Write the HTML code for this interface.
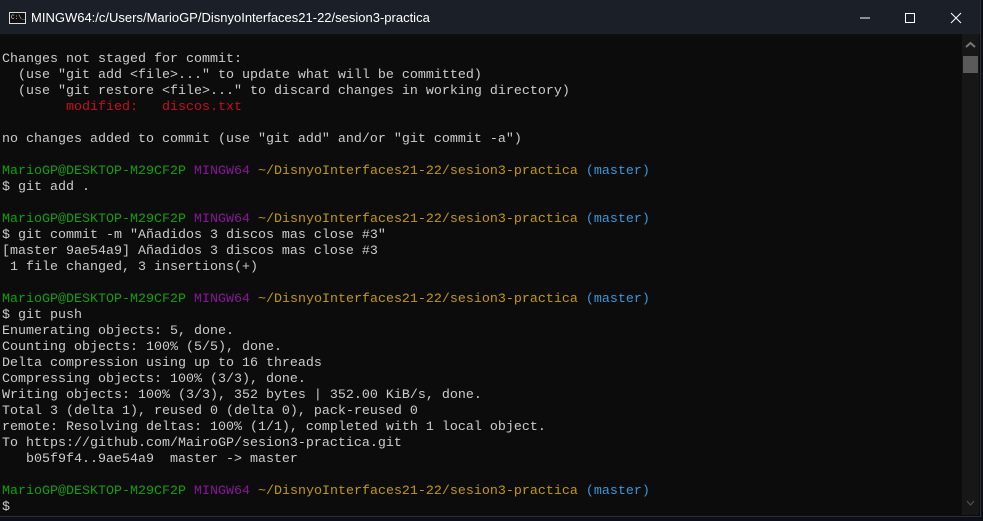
<!DOCTYPE html>
<html><head><meta charset="utf-8"><style>
html,body{margin:0;padding:0;background:#0c1016;width:983px;height:521px;overflow:hidden}
.win{position:absolute;left:0;top:0;width:980px;height:516px;background:#0c0c0c;border-right:1px solid #2b3038;border-bottom:1px solid #2b3038}
.title{position:absolute;left:0;top:0;width:980px;height:34px;background:#1a1f28;color:#fff;font:13px "Liberation Sans",sans-serif}
.title .t{position:absolute;left:31px;top:10px}
.ico{position:absolute;left:9px;top:12px;width:15px;height:10px;border:1px solid #ddd;background:#111}
.ico:after{content:"C:\\_";position:absolute;left:1px;top:1px;font:6px/7px "Liberation Mono",monospace;color:#ddd}
.term{position:absolute;left:2px;top:36px;font:13.33px/16px "Liberation Mono",monospace;color:#cccccc;white-space:pre}
.g{color:#13a10e}.m{color:#881798}.y{color:#c19c00}.b{color:#3a96dd}.r{color:#c50f1f}
.sb{position:absolute;left:962px;top:34px;width:17px;height:481px;background:#171717}
.thumb{position:absolute;left:1px;top:22px;width:15px;height:17px;background:#5a5a5a}
</style></head><body>
<div class="win">
<div class="title"><div class="ico"></div><span class="t">MINGW64:/c/Users/MarioGP/DisnyoInterfaces21-22/sesion3-practica</span>
<svg style="position:absolute;left:855px;top:10px" width="120" height="16">
<line x1="5" y1="8" x2="15" y2="8" stroke="#fff" stroke-width="1"/>
<rect x="50.5" y="3.5" width="9" height="9" fill="none" stroke="#fff"/>
<path d="M96 3L106 13M106 3L96 13" stroke="#fff" stroke-width="1"/>
</svg></div>
<div class="term">
Changes not staged for commit:
  (use "git add &lt;file&gt;..." to update what will be committed)
  (use "git restore &lt;file&gt;..." to discard changes in working directory)
<span class="r">        modified:   discos.txt</span>

no changes added to commit (use "git add" and/or "git commit -a")

<span class="g">MarioGP@DESKTOP-M29CF2P</span> <span class="m">MINGW64</span> <span class="y">~/DisnyoInterfaces21-22/sesion3-practica</span> <span class="b">(master)</span>
$ git add .

<span class="g">MarioGP@DESKTOP-M29CF2P</span> <span class="m">MINGW64</span> <span class="y">~/DisnyoInterfaces21-22/sesion3-practica</span> <span class="b">(master)</span>
$ git commit -m "Añadidos 3 discos mas close #3"
[master 9ae54a9] Añadidos 3 discos mas close #3
 1 file changed, 3 insertions(+)

<span class="g">MarioGP@DESKTOP-M29CF2P</span> <span class="m">MINGW64</span> <span class="y">~/DisnyoInterfaces21-22/sesion3-practica</span> <span class="b">(master)</span>
$ git push
Enumerating objects: 5, done.
Counting objects: 100% (5/5), done.
Delta compression using up to 16 threads
Compressing objects: 100% (3/3), done.
Writing objects: 100% (3/3), 352 bytes | 352.00 KiB/s, done.
Total 3 (delta 1), reused 0 (delta 0), pack-reused 0
remote: Resolving deltas: 100% (1/1), completed with 1 local object.
To https://github.com/MairoGP/sesion3-practica.git
   b05f9f4..9ae54a9  master -&gt; master

<span class="g">MarioGP@DESKTOP-M29CF2P</span> <span class="m">MINGW64</span> <span class="y">~/DisnyoInterfaces21-22/sesion3-practica</span> <span class="b">(master)</span>
$</div>
<div class="sb"><svg width="17" height="14" style="position:absolute;top:4px"><path d="M4 9L8.5 5L13 9" stroke="#777" stroke-width="2" fill="none"/></svg><div class="thumb"></div>
<svg width="17" height="14" style="position:absolute;top:462px"><path d="M5 5L8.5 9L12 5" stroke="#555" stroke-width="1" fill="none"/></svg></div>
</div>
</body></html>
